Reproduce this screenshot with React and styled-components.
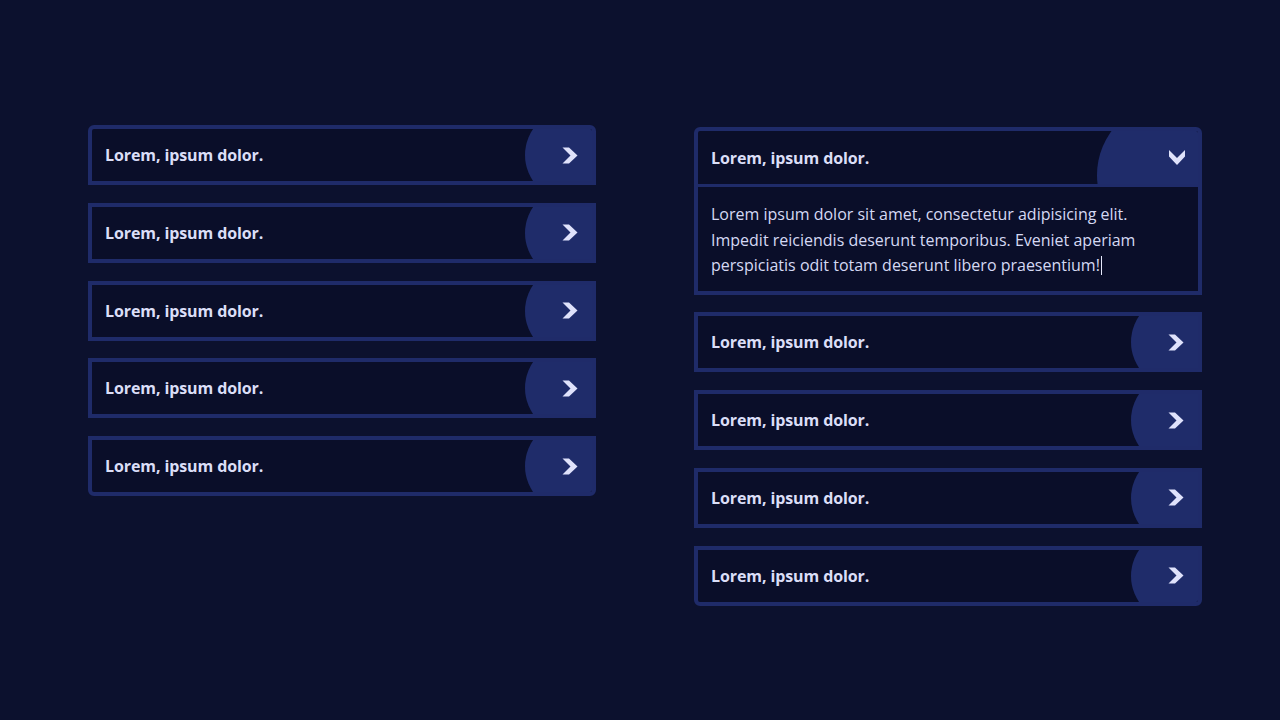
import React from "react";
import styled, { createGlobalStyle, css } from "styled-components";

const Global = createGlobalStyle`
  html, body { margin: 0; padding: 0; background: #0c112e; }
  body { font-family: "Open Sans", "Noto Sans", sans-serif; -webkit-font-smoothing: antialiased; }
  #root { min-height: 720px; }
`;

const Page = styled.div`
  box-sizing: border-box;
  width: 1280px;
  height: 720px;
  padding: 125px 78px 0 88px;
  display: grid;
  grid-template-columns: 508px 508px;
  column-gap: 98px;
  align-items: start;
`;

const Column = styled.div`
  display: flex;
  flex-direction: column;
  gap: 17.75px;
  padding-top: ${(p) => p.$offset || 0}px;
`;

const Item = styled.div`
  box-sizing: border-box;
  border: 4px solid #1f2b69;
  background: #0a0e29;
  overflow: hidden;
  border-radius: ${(p) =>
    p.$first && p.$last ? "6px" : p.$first ? "6px 6px 0 0" : p.$last ? "0 0 6px 6px" : "0"};
`;

const Header = styled.div`
  position: relative;
  display: flex;
  align-items: center;
  height: ${(p) => (p.$open ? 53 : 52)}px;
  padding-left: 13px;
  overflow: hidden;
  ${(p) =>
    p.$open &&
    css`
      border-bottom: 3px solid #1f2b69;
    `}
`;

const Label = styled.span`
  font-size: 16px;
  font-weight: 700;
  color: #dbdef7;
  letter-spacing: -0.1px;
`;

const IconBox = styled.div`
  position: relative;
  margin-left: auto;
  width: 67px;
  align-self: stretch;
  display: flex;
  align-items: center;
  justify-content: flex-end;
  padding-right: ${(p) => (p.$open ? 13 : 14)}px;
  box-sizing: border-box;

  &::before {
    content: "";
    position: absolute;
    border-radius: 50%;
    background: #1f2c6a;
    ${(p) =>
      p.$open
        ? css`
            left: -34px;
            top: -30px;
            width: 148px;
            height: 148px;
          `
        : css`
            left: 0;
            top: -20px;
            width: 92px;
            height: 92px;
          `}
  }
`;

const ChevronSvg = styled.svg`
  position: relative;
  z-index: 1;
  display: block;
  width: 16px;
  height: 17px;
  ${(p) =>
    p.$open &&
    css`
      transform: rotate(90deg);
    `}
`;

const Content = styled.div`
  padding: 15px 13px 12px;
  font-size: 16px;
  line-height: 25.5px;
  color: #d5d9f3;
`;

const Caret = styled.span`
  display: inline-block;
  width: 1px;
  height: 19px;
  margin-left: 1px;
  vertical-align: -4px;
  background: #e6e8fb;
`;

const Chevron = ({ open }) => (
  <ChevronSvg $open={open} viewBox="0 0 16 17">
    <polygon points="0.5,0.5 7,0.5 15.5,8.5 7,16.5 0.5,16.5 8.5,8.5" fill="#dfe2fb" />
  </ChevronSvg>
);

const AccItem = ({ first, last, open, children }) => (
  <Item $first={first} $last={last}>
    <Header $open={open}>
      <Label>Lorem, ipsum dolor.</Label>
      <IconBox $open={open}>
        <Chevron open={open} />
      </IconBox>
    </Header>
    {open && <Content>{children}</Content>}
  </Item>
);

export default function App() {
  const n = [0, 1, 2, 3, 4];
  return (
    <>
      <Global />
      <Page>
        <Column>
          {n.map((i) => (
            <AccItem key={i} first={i === 0} last={i === 4} />
          ))}
        </Column>
        <Column $offset={2}>
          <AccItem first open>
            Lorem ipsum dolor sit amet, consectetur adipisicing elit.
            <br />
            Impedit reiciendis deserunt temporibus. Eveniet aperiam
            <br />
            perspiciatis odit totam deserunt libero praesentium!
            <Caret />
          </AccItem>
          {[1, 2, 3, 4].map((i) => (
            <AccItem key={i} last={i === 4} />
          ))}
        </Column>
      </Page>
    </>
  );
}
